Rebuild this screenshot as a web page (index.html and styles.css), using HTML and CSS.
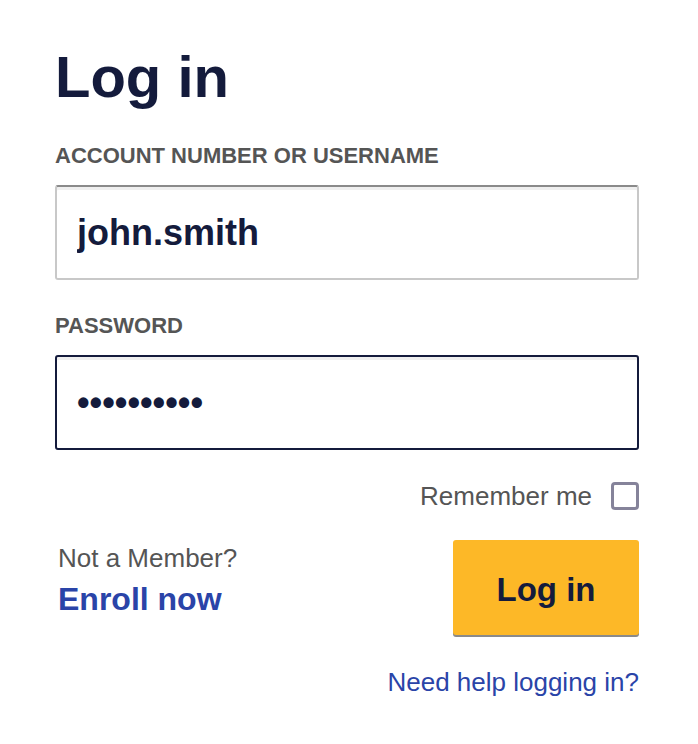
FILE: index.html
```html
<!DOCTYPE html>
<html lang="en">
<head>
    <meta charset="UTF-8">
    <meta name="viewport" content="width=device-width, initial-scale=1.0">
    <title>Log in</title>
    <link rel="stylesheet" href="styles.css">
</head>
<body>
    <div class="login">
        <h1>Log in</h1>

        <label class="field-label" for="username">ACCOUNT NUMBER OR USERNAME</label>
        <input class="field" type="text" id="username" value="john.smith">

        <label class="field-label" for="password">PASSWORD</label>
        <input class="field" type="password" id="password" value="secret1234" autofocus>

        <div class="remember">
            <label for="remember">Remember me</label>
            <input type="checkbox" id="remember" class="check">
        </div>

        <div class="actions">
            <div class="enroll">
                <div class="enroll-text">Not a Member?</div>
                <a href="#" class="enroll-link">Enroll now</a>
            </div>
            <button class="submit">Log in</button>
        </div>

        <div class="help">
            <a href="#">Need help logging in?</a>
        </div>
    </div>

    <script>
        // keep the caret at the end of the password
        const pw = document.getElementById('password');
        pw.focus();
        pw.setSelectionRange(pw.value.length, pw.value.length);
    </script>
</body>
</html>
```

FILE: styles.css
```css
body {
    margin: 0;
    background: #fff;
    font-family: "Liberation Sans", Arial, Helvetica, sans-serif;
    color: #141b3c;
}
.login {
    width: 584px;
    margin-left: 55px;
    padding-top: 47px;
}
h1 {
    margin: 0;
    font-size: 58px;
    line-height: 59px;
    font-weight: bold;
    color: #141b3c;
}
.field-label {
    display: block;
    margin: 39px 0 18px;
    font-size: 22px;
    line-height: 22px;
    font-weight: bold;
    color: #555;
}
.field-label + .field + .field-label {
    margin-top: 35px;
}
.field {
    display: block;
    box-sizing: border-box;
    width: 100%;
    height: 95px;
    margin: 0;
    padding: 0 20px;
    border: 2px solid #c8c8c8;
    border-top-color: #8a8a8a;
    border-radius: 3px;
    box-shadow: inset 0 3px 0 #efefef;
    font-family: inherit;
    font-size: 36px;
    font-weight: bold;
    color: #141b3c;
    caret-color: #141b3c;
    outline: none;
}
.field:focus {
    border-color: #141b3c;
}
.remember {
    display: flex;
    justify-content: flex-end;
    align-items: center;
    gap: 19px;
    margin-top: 32px;
    font-size: 26px;
    line-height: 28px;
    color: #555;
}
.check {
    appearance: none;
    -webkit-appearance: none;
    box-sizing: border-box;
    width: 28px;
    height: 28px;
    margin: 0;
    border: 3px solid #85839a;
    border-radius: 4px;
    background: #fff;
}
.actions {
    display: flex;
    justify-content: space-between;
    align-items: flex-start;
    margin-top: 30px;
}
.enroll {
    padding: 3px 0 0 3px;
}
.enroll-text {
    font-size: 26px;
    line-height: 30px;
    color: #555;
}
.enroll-link {
    display: block;
    margin-top: 8px;
    font-size: 32px;
    line-height: 36px;
    font-weight: bold;
    color: #2a44a8;
    text-decoration: none;
}
.submit {
    width: 186px;
    height: 95px;
    padding: 5px 0 0;
    border: none;
    border-radius: 3px;
    background: #fdb827;
    box-shadow: 0 2px 0 #8a8a8a;
    font-family: inherit;
    font-size: 33px;
    font-weight: bold;
    color: #141b3c;
    cursor: pointer;
}
.help {
    margin-top: 32px;
    text-align: right;
    font-size: 26px;
    line-height: 30px;
}
.help a {
    color: #2a44a8;
    text-decoration: none;
}
```
